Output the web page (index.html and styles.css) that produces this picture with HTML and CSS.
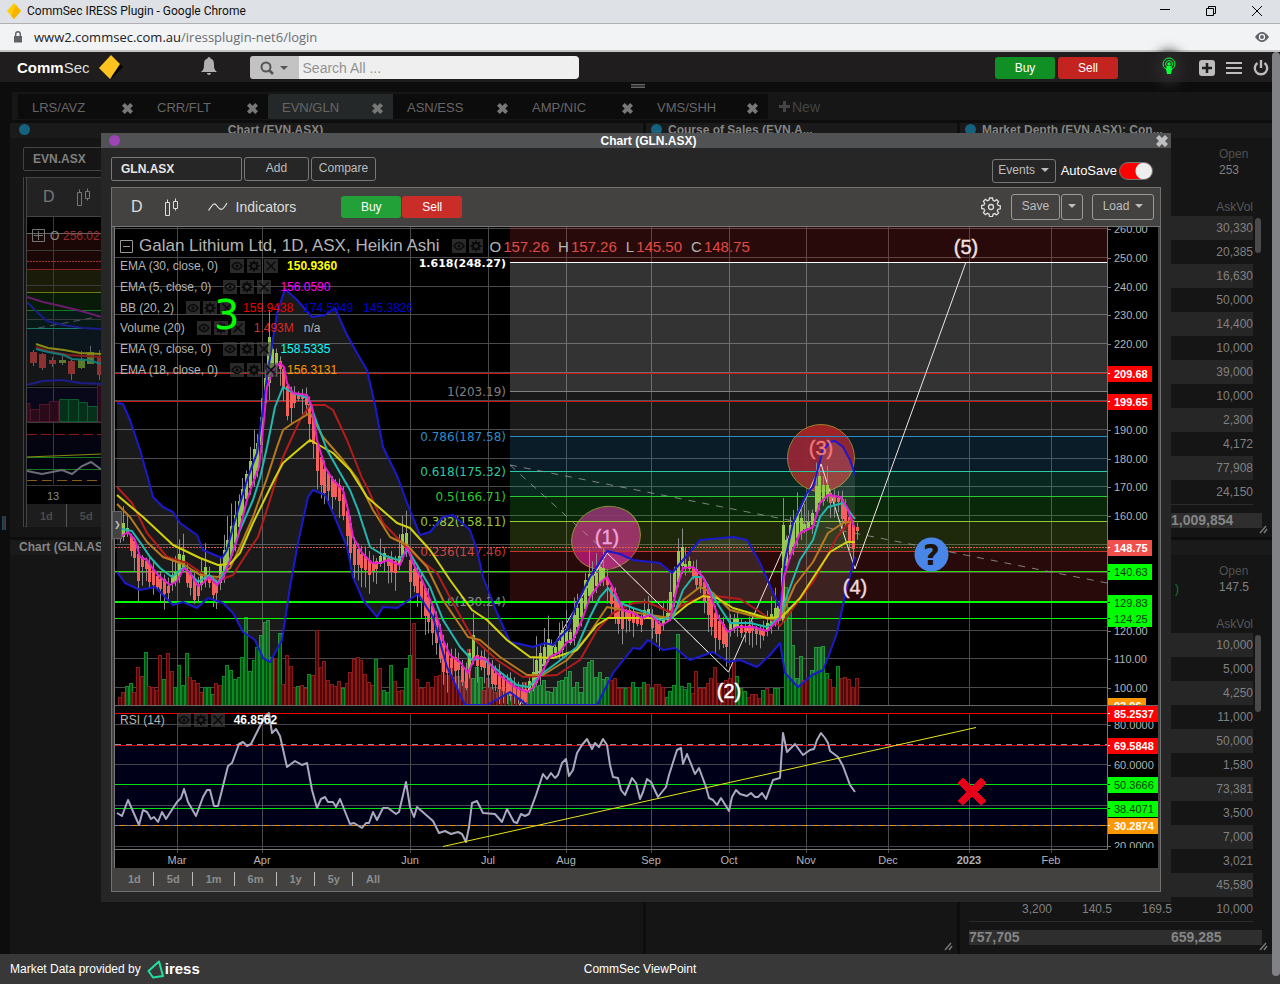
FILE: index.html
```html
<!DOCTYPE html>
<html lang="en">
  <head>
    <meta charset="UTF-8" />
    <title>CommSec IRESS Plugin</title>
    <link rel="stylesheet" href="styles.css">
  </head>
  <body>
    <!-- Shared icons -->
    <svg class="sprite" aria-hidden="true">
      <symbol id="i-cross" viewBox="0 0 12 12"><path d="M3 0 6 3 9 0 12 3 9 6 12 9 9 12 6 9 3 12 0 9 3 6 0 3z" /></symbol>
      <symbol id="i-caret" viewBox="0 0 8 4"><path d="M0 0H8L4 4z" /></symbol>
      <symbol id="i-eye" viewBox="0 0 14 14"><path d="M2 7q5-7 10 0q-5 7-10 0z" fill="none" stroke="currentColor" stroke-width="1.3" /><circle cx="7" cy="7" r="1.6" fill="currentColor" /></symbol>
      <symbol id="i-gear" viewBox="0 0 14 14"><circle cx="7" cy="7" r="3" fill="none" stroke="currentColor" stroke-width="2" /><path d="M7 1.5V4M7 10v2.500M1.500 7H4M10 7h2.500M3.100 3.100l1.800 1.800M9.100 9.100l1.800 1.800M3.100 10.900l1.800-1.800M9.100 4.900l1.800-1.800" stroke="currentColor" stroke-width="1.800" /></symbol>
      <symbol id="i-del" viewBox="0 0 14 14"><path d="M2.500 2.500l9 9M11.500 2.500l-9 9" stroke="currentColor" stroke-width="1.500" /></symbol>
      <symbol id="i-candles" viewBox="0 0 14 19"><path d="M.5 4.500h4v13h-4zM2.500 1.500v3M8.500 3.500h4v7h-4zM10.500 .5v3M10.500 10.500v2" fill="none" stroke="currentColor" /></symbol>
      <symbol id="i-grip" viewBox="0 0 9 9"><path d="M1 8 7 1M5 8l3-4" fill="none" stroke="currentColor" stroke-width="1.500" /></symbol>
    </svg>

    <div class="titlebar">
      <svg width="16" height="18" viewBox="0 0 16 18"><path d="M8 1 15 9 8 17 1 9z" fill="#ffcb05" /><path d="M10 3 15 9 8 17 5 14z" fill="#f5b400" /></svg>
      <span>CommSec IRESS Plugin - Google Chrome</span>
      <div class="window-buttons">
        <button aria-label="Minimise"><svg width="12" height="12"><path d="M1 4.500H11" stroke="#000" /></svg></button>
        <button aria-label="Restore"><svg width="12" height="12"><path d="M1.500 3.500h7v7h-7zM3.500 3V1.500h7v7H9" fill="none" stroke="#000" /></svg></button>
        <button aria-label="Close"><svg width="12" height="12"><path d="M1 1l10 10M11 1 1 11" stroke="#000" /></svg></button>
      </div>
    </div>

    <div class="addressbar">
      <svg width="10" height="12" viewBox="0 0 10 12"><path d="M1 5h8v6.500H1z" fill="#5f6368" /><path d="M2.700 5V3a2.300 2.300 0 014.600 0v2" fill="none" stroke="#5f6368" stroke-width="1.400" /></svg>
      <span class="url">www2.commsec.com.au<span>/iressplugin-net6/login</span></span>
      <svg class="push" width="14" height="10" viewBox="0 0 14 10"><path d="M0 5q7-10 14 0q-7 10-14 0z" fill="#5f6368" /><circle cx="7" cy="5" r="3.200" fill="#f1f3f4" /><circle cx="7" cy="5" r="1.900" fill="#5f6368" /></svg>
    </div>

    <div class="app">
      <header class="topbar">
        <a class="logo" href="#"><b>Comm</b><span>Sec</span>
          <svg width="24" height="24" viewBox="0 0 24 24"><path d="M13 1 24 12 13 23z" fill="#000" /><path d="M12 0 21 9 11 24 0 13z" fill="#ffc21f" /></svg>
        </a>
        <button class="icon-btn bell" aria-label="Notifications"><svg width="18" height="18" viewBox="0 0 18 18"><path d="M9 0a1.500 1.500 0 011.500 1.500C13.500 2.500 14 4.500 14 8s.5 5 3 7H1c2.500-2 3-3.500 3-7s.5-5.500 3.500-6.500A1.500 1.500 0 019 0zM7 16h4a2 2 0 01-4 0z" fill="#b0b0b0" /></svg></button>
        <div class="search">
          <button aria-label="Search type"><svg width="14" height="14" viewBox="0 0 14 14"><circle cx="6" cy="6" r="4.500" fill="none" stroke="#555" stroke-width="2" /><path d="M9 9l4 4" stroke="#555" stroke-width="2.500" /></svg><svg class="caret"><use href="#i-caret" /></svg></button>
          <input type="text" aria-label="Search" placeholder="Search All ...">
        </div>
        <div class="trade">
          <button class="buy">Buy</button>
          <button class="sell">Sell</button>
        </div>
        <div class="tools">
          <button class="icon-btn bulb" aria-label="Live data"><svg width="14" height="18" viewBox="0 0 14 18"><g fill="none" stroke="#0bff3b"><circle cx="7" cy="7" r="6" /><circle cx="7" cy="7" r="3.500" /></g><circle cx="7" cy="7" r="1.800" fill="#0bff3b" /><path d="M5 9h4l1 3-1 5H5l-1-5z" fill="#0bff3b" /></svg></button>
          <button class="icon-btn" aria-label="Add"><svg width="16" height="16" viewBox="0 0 16 16"><rect width="16" height="16" rx="3" fill="#bdbdbd" /><path d="M8 3v10M3 8h10" stroke="#1f1d1e" stroke-width="2.500" /></svg></button>
          <button class="icon-btn" aria-label="Menu"><svg width="16" height="14" viewBox="0 0 16 14"><path d="M0 2h16M0 7h16M0 12h16" stroke="#bdbdbd" stroke-width="2" /></svg></button>
          <button class="icon-btn" aria-label="Log out"><svg width="16" height="16" viewBox="0 0 16 16"><path d="M4.500 3a6.200 6.200 0 107 0M8 0v8" fill="none" stroke="#bdbdbd" stroke-width="2.400" /></svg></button>
        </div>
      </header>

      <div class="handle"><span></span></div>

      <nav class="tabs">
        <div class="tab"><a href="#">LRS/AVZ</a><button aria-label="Close LRS/AVZ"><svg><use href="#i-cross" /></svg></button></div>
        <div class="tab"><a href="#">CRR/FLT</a><button aria-label="Close CRR/FLT"><svg><use href="#i-cross" /></svg></button></div>
        <div class="tab active"><a href="#">EVN/GLN</a><button aria-label="Close EVN/GLN"><svg><use href="#i-cross" /></svg></button></div>
        <div class="tab"><a href="#">ASN/ESS</a><button aria-label="Close ASN/ESS"><svg><use href="#i-cross" /></svg></button></div>
        <div class="tab"><a href="#">AMP/NIC</a><button aria-label="Close AMP/NIC"><svg><use href="#i-cross" /></svg></button></div>
        <div class="tab"><a href="#">VMS/SHH</a><button aria-label="Close VMS/SHH"><svg><use href="#i-cross" /></svg></button></div>
        <button class="new-tab"><svg width="11" height="11" viewBox="0 0 11 11"><path d="M5.500 0v11M0 5.500h11" stroke="currentColor" stroke-width="3" /></svg>New</button>
      </nav>

      <main class="workspace">
        <div class="column">
          <section class="panel">
            <h2 class="panel-head centred"><i class="dot"></i><span>Chart (EVN.ASX)</span></h2>
            <div class="mini">
              <input class="code" type="text" aria-label="Security code" value="EVN.ASX">
              <div class="mini-frame">
                <div class="mini-bar"><span>D</span><svg width="14" height="19"><use href="#i-candles" /></svg></div>
                <svg class="mini-chart" viewBox="27 217 75 287" width="75" height="287">
                  <rect x="27" y="217" width="75" height="287" fill="#000" />
                  <rect x="27" y="233" width="75" height="36" fill="#1c0707" />
                  <rect x="27" y="269" width="75" height="23" fill="#1a1b08" />
                  <rect x="27" y="292" width="75" height="18" fill="#081a08" />
                  <rect x="27" y="310" width="75" height="18" fill="#071a17" />
                  <rect x="27" y="328" width="75" height="39" fill="#0b161c" />
                  <rect x="27" y="353" width="75" height="33" fill="#151617" />
                  <rect x="27" y="387" width="75" height="35" fill="#08081a" />
                  <rect x="27" y="434" width="75" height="47" fill="#040410" />
                  <path d="M53.500 217V484M27 250.500h75M27 285.500h75M27 319.500h75M27 387.500h75M27 422.500h75M27 485.500h75" stroke="#3a3a3a" />
                  <path d="M27 233.500h75" stroke="#666" /><path d="M27 261.500h75" stroke="#9a3030" stroke-dasharray="2 1" />
                  <path d="M27 269.500h75" stroke="#8a2020" /><path d="M27 292.500h75" stroke="#6c7a18" />
                  <path d="M27 310.500h75M27 457.500h75M27 469.500h75" stroke="#167a20" /><path d="M27 328.500h75" stroke="#167a68" />
                  <path d="M27 434.500h75" stroke="#8a1818" stroke-dasharray="10 4" /><path d="M27 480.500h75" stroke="#8a5a18" stroke-dasharray="10 5" />
                  <path d="M27 457l75-3" stroke="#8a8a10" /><path d="M38 328 102 316" stroke="#556" stroke-dasharray="7 5" />
                  <g fill="#2a0a18" stroke="#52142c"><path d="M27 403.500h3v18h-3zM30.500 409.500h9v12h-9zM39.500 404.500h10v17h-10zM49.500 401.500h9v20h-9zM97.500 385.500h5v36h-5z" /></g>
                  <g fill="#06301a" stroke="#0b5a30"><path d="M59.500 399.500h9v22h-9zM68.500 399.500h10v22h-10zM78.500 402.500h9v19h-9zM87.500 406.500h10v15h-10z" /></g>
                  <path d="M33.500 350v16M42.500 353v17M52.500 357v10M62.500 355v10M71.500 360v20M81.500 351v18M90.500 346v18M99.500 350v30" stroke="#666" />
                  <path d="M30 352h7v11h-7zM39 354h7v14h-7zM49 360h7v4h-7zM68 361h7v13h-7zM97 357h5v18h-5z" fill="#8c3232" />
                  <path d="M59 360h7v3h-7zM78 359h7v9h-7zM87 352h7v12h-7z" fill="#5c7a2c" />
                  <g fill="none" stroke-width="2"><path d="M27 297l16 5 18 4 20 5 21 6" stroke="#6a1c6a" /><path d="M27 302l10 10 10 9 16 4 20 3 19 1M27 385l15-4 20-1 18 3 22 1" stroke="#1c1c8a" /><path d="M36 344l12 4 16 2 16 3 22 1" stroke="#8a8a14" /><path d="M36 347l12 4 20 4 34 2" stroke="#8a1c1c" /><path d="M36 349l12 3 16 3 8 4 16 1 14 4" stroke="#147a7a" /><path d="M27 471l15 3 20-4 10 4 10-8 9-4 11 8" stroke="#6c6c78" /></g>
                  <path d="M32.500 229.500h12v12h-12zM38.500 231v9M34 235.500h9" fill="none" stroke="#777" />
                  <text x="50" y="240" fill="#888" font-size="12">O</text><text x="63" y="240" fill="#9a2c2c" font-size="12">256.02</text>
                  <text x="53" y="500" fill="#888" font-size="11" text-anchor="middle">13</text>
                </svg>
                <div class="mini-range"><button>1d</button><button>5d</button></div>
              </div>
            </div>
          </section>
          <section class="panel">
            <h2 class="panel-head left"><span>Chart (GLN.ASX)</span></h2>
          </section>
        </div>

        <section class="panel">
          <h2 class="panel-head"><i class="dot"></i><span>Course of Sales (EVN.A...</span></h2>
          <svg class="resizer" width="9" height="9"><use href="#i-grip" /></svg>
        </section>

        <div class="column">
          <section class="panel">
            <h2 class="panel-head"><i class="dot"></i><span>Market Depth (EVN.ASX): Con...</span></h2>
            <dl class="quote"><dt>Open</dt><dd>253</dd></dl>
            <div class="depth">
              <table>
                <thead><tr><th></th><th></th><th></th><th>AskVol</th></tr></thead>
                <tbody>
                  <tr><td></td><td></td><td></td><td>30,330</td></tr>
                  <tr><td></td><td></td><td></td><td>20,385</td></tr>
                  <tr><td></td><td></td><td></td><td>16,630</td></tr>
                  <tr><td></td><td></td><td></td><td>50,000</td></tr>
                  <tr><td></td><td></td><td></td><td>14,400</td></tr>
                  <tr><td></td><td></td><td></td><td>10,000</td></tr>
                  <tr><td></td><td></td><td></td><td>39,000</td></tr>
                  <tr><td></td><td></td><td></td><td>10,000</td></tr>
                  <tr><td></td><td></td><td></td><td>2,300</td></tr>
                  <tr><td></td><td></td><td></td><td>4,172</td></tr>
                  <tr><td></td><td></td><td></td><td>77,908</td></tr>
                  <tr><td></td><td></td><td></td><td>24,150</td></tr>
                </tbody>
              </table>
              <span class="thumb short"></span>
            </div>
            <div class="totals"><span></span><span>1,009,854</span></div>
            <svg class="resizer" width="9" height="9"><use href="#i-grip" /></svg>
          </section>
          <section class="panel">
            <h2 class="panel-head"></h2>
            <dl class="quote"><dt>Open</dt><dd><span class="change">)</span>147.5</dd></dl>
            <div class="depth">
              <table>
                <thead><tr><th></th><th></th><th></th><th>AskVol</th></tr></thead>
                <tbody>
                  <tr><td></td><td></td><td></td><td>10,000</td></tr>
                  <tr><td></td><td></td><td></td><td>5,000</td></tr>
                  <tr><td></td><td></td><td></td><td>4,250</td></tr>
                  <tr><td></td><td></td><td></td><td>11,000</td></tr>
                  <tr><td></td><td></td><td></td><td>50,000</td></tr>
                  <tr><td></td><td></td><td></td><td>1,580</td></tr>
                  <tr><td></td><td></td><td></td><td>73,381</td></tr>
                  <tr><td></td><td></td><td></td><td>3,500</td></tr>
                  <tr><td></td><td></td><td></td><td>7,000</td></tr>
                  <tr><td></td><td></td><td></td><td>3,021</td></tr>
                  <tr><td></td><td></td><td></td><td>45,580</td></tr>
                  <tr><td>3,200</td><td>140.5</td><td>169.5</td><td>10,000</td></tr>
                </tbody>
              </table>
              <span class="thumb"></span>
            </div>
            <div class="totals"><span>757,705</span><span>659,285</span></div>
            <svg class="resizer" width="9" height="9"><use href="#i-grip" /></svg>
          </section>
        </div>

        <span class="splitter"></span>

        <!-- Floating chart window -->
        <section class="dialog">
          <header class="dialog-head">
            <i class="dot"></i>
            <h2>Chart (GLN.ASX)</h2>
            <button aria-label="Close"><svg><use href="#i-cross" /></svg></button>
          </header>
          <div class="controls">
            <input class="code" type="text" aria-label="Security code" value="GLN.ASX">
            <button class="btn">Add</button>
            <button class="btn">Compare</button>
            <button class="btn events">Events<svg class="caret"><use href="#i-caret" /></svg></button>
            <label class="autosave">AutoSave<input type="checkbox" checked></label>
          </div>

          <div class="frame">
            <div class="toolbar">
              <button class="tool interval">D</button>
              <button class="tool" aria-label="Chart style"><svg width="14" height="19"><use href="#i-candles" /></svg></button>
              <button class="tool indicators"><svg width="20" height="10" viewBox="0 0 20 10"><path d="M.5 8.500C5 2 6 0 9 4s5 6 10-3" fill="none" stroke="currentColor" stroke-width="1.200" /></svg>Indicators</button>
              <button class="buy">Buy</button>
              <button class="sell">Sell</button>
              <button class="tool settings" aria-label="Settings"><svg width="20" height="20" viewBox="0 0 20 20" fill="none" stroke="currentColor" stroke-width="1.300"><path d="M8.500 1h3l.5 2.300 1.600.7 2-1.300 2 2-1.300 2 .7 1.600 2.300.5v3l-2.300.5-.7 1.600 1.300 2-2 2-2-1.300-1.600.7-.5 2.300h-3L8 17l-1.600-.7-2 1.300-2-2 1.300-2L3 12l-2.300-.5v-3L3 8l.7-1.600-1.300-2 2-2 2 1.300L8 3z" /><circle cx="10" cy="10" r="2.500" /></svg></button>
              <div class="group">
                <button class="btn">Save</button><button class="btn drop" aria-label="Save options"><svg class="caret"><use href="#i-caret" /></svg></button>
              </div>
              <button class="btn load">Load<svg class="caret"><use href="#i-caret" /></svg></button>
            </div>

            <div class="chart">
              <svg id="chart" viewBox="115 227 1043 641"></svg>
              <div class="legend">
                <div class="legend-title">
                  <svg width="13" height="13"><path d="M.5 .5h12v12H.5zM3 6.500h7" fill="none" stroke="#999" /></svg>
                  <span>Galan Lithium Ltd, 1D, ASX, Heikin Ashi</span>
                  <div class="mini-btns"><button aria-label="Hide"><svg><use href="#i-eye" /></svg></button><button aria-label="Format"><svg><use href="#i-gear" /></svg></button></div>
                  <div class="ohlc"><span>O<b>157.26</b></span><span>H<b>157.26</b></span><span>L<b>145.50</b></span><span>C<b>148.75</b></span></div>
                </div>
                <div class="studies" id="studies"></div>
              </div>
              <div class="legend rsi" id="rsiLegend"></div>
              <span class="note">3</span>
              <button class="expand" aria-label="Show drawing tools">&#x276F;</button>
            </div>

            <div class="range">
              <button>1d</button><button>5d</button><button>1m</button><button>6m</button><button>1y</button><button>5y</button><button>All</button>
            </div>
          </div>
        </section>
      </main>
      <span class="page-scroll"></span>
    </div>

    <footer class="footer">
      <div class="provider">Market Data provided by
        <svg width="17" height="19" viewBox="0 0 17 19"><path d="M12 1.500 1.500 11l4.500 6.500 10-1.500z" fill="none" stroke="#1fe29b" stroke-width="2" stroke-linejoin="round" /></svg>
        <b>iress</b>
      </div>
      <span>CommSec ViewPoint</span>
      <span></span>
    </footer>

    <script src="chart.js"></script>
  </body>
</html>
```
FILE: styles.css
```css
:root {
  --page: #0d0d0d;
  --panel: #151515;
  --bar: #434240;
  --dialog: #262626;
  --line: #777;
  --text: #bdbdbd;
  --dim: #808080;
}

* {
  box-sizing: border-box;
}

body {
  margin: 0;
  height: 100vh;
  display: flex;
  flex-direction: column;
  overflow: hidden;
  background: var(--page);
  color: var(--text);
  font: 12px/16px "Liberation Sans", Arial, sans-serif;
}

button,
input {
  font: inherit;
  color: inherit;
  margin: 0;
}

button {
  display: flex;
  align-items: center;
  justify-content: center;
  padding: 0;
  border: 0;
  background: none;
  cursor: pointer;
}

h2 {
  margin: 0;
  font-size: 12px;
}

a {
  color: inherit;
  text-decoration: none;
}

svg {
  display: block;
  flex: none;
}

.sprite {
  position: absolute;
  width: 0;
  height: 0;
}

.caret {
  width: 8px;
  height: 4px;
  margin-left: 6px;
  fill: currentColor;
}

/* Browser chrome */
.titlebar {
  display: flex;
  align-items: center;
  height: 24px;
  flex: none;
  padding: 0 17px 2px 6px;
  gap: 5px;
  background: #dee1e6;
  border-bottom: 1px solid #b0b0b0;
  color: #111;
  font-family: Roboto, sans-serif;
}

.window-buttons {
  display: flex;
  gap: 34px;
  margin-left: auto;
}

.addressbar {
  display: flex;
  align-items: center;
  height: 28px;
  flex: none;
  padding: 0 11px 0 13px;
  gap: 11px;
  background: #f1f3f4;
  border-bottom: 2px solid #c4c4c4;
  color: #202124;
  font-family: "Open Sans", sans-serif;
  font-size: 13px;
}

.url span {
  color: #6a6e73;
}

.push {
  margin-left: auto;
}

/* App header */
.app {
  position: relative;
  flex: 1;
  min-height: 0;
  display: flex;
  flex-direction: column;
  padding-right: 8px;
}

.topbar {
  display: flex;
  align-items: center;
  height: 30px;
  flex: none;
  padding: 1px 3px 0 17px;
  background: #1f1d1e;
}

.logo {
  display: flex;
  align-items: center;
  color: #fff;
  font-size: 15px;
}

.logo span {
  color: #ddd;
}

.logo svg {
  margin: -1px 0 1px 9px;
}

.bell {
  margin-left: 77px;
  padding-bottom: 4px;
}

.search {
  display: flex;
  width: 329px;
  height: 23px;
  margin-left: 32px;
}

.search button {
  width: 49px;
  background: #c3c3c3;
  border-radius: 3px 0 0 3px;
  color: #555;
}

.search input {
  flex: 1;
  min-width: 0;
  padding: 0 4px;
  border: 0;
  border-radius: 0 4px 4px 0;
  background: #efefef;
  font-size: 14px;
}

.search input::placeholder {
  color: #939393;
}

.trade {
  display: flex;
  gap: 3px;
  margin-left: auto;
}

.buy,
.sell {
  width: 60px;
  height: 22px;
  border-radius: 3px;
  color: #fff;
}

.buy {
  background: #0f8f24;
}

.sell {
  background: #c42420;
}

.tools {
  display: flex;
  align-items: center;
  gap: 11px;
  margin-left: 44px;
}

.bulb {
  margin-right: 12px;
  padding-bottom: 4px;
  border-radius: 50%;
  background: #2a292a;
  box-shadow: 0 0 12px 6px #2a292a;
}

.handle {
  display: flex;
  justify-content: center;
  height: 10px;
  flex: none;
  padding: 2px 0 0 4px;
}

.handle span {
  width: 14px;
  height: 4px;
  border: solid #666;
  border-width: 1px 0;
  background: #333;
}

.tabs {
  display: flex;
  height: 28px;
  flex: none;
  margin-left: 12px;
  padding: 2px 0 1px 6px;
  background: #161616;
  color: #666;
  font-size: 13px;
}

.tab {
  display: flex;
  align-items: center;
  justify-content: space-between;
  width: 125px;
  padding: 3px 10px 0 14px;
  background: #0d0c0d;
}

.tab svg {
  width: 11px;
  height: 11px;
  fill: #777;
}

.tab.active {
  background: #242828;
  border-radius: 4px 4px 0 0;
  box-shadow: 3px 0 #242828;
}

.new-tab {
  gap: 2px;
  padding-left: 11px;
  color: #444;
  font-size: 14px;
}

/* Workspace */
.workspace {
  position: relative;
  flex: 1;
  min-height: 0;
  display: grid;
  grid-template-columns: 633fr 311fr 312fr;
  gap: 3px;
  padding: 3px 0 0 10px;
}

.column {
  display: grid;
  grid-template-rows: 1fr 1fr;
  gap: 3px;
  min-height: 0;
  min-width: 0;
}

.panel {
  position: relative;
  background: var(--panel);
  min-width: 0;
  overflow: hidden;
}

.panel-head {
  display: flex;
  align-items: center;
  gap: 6px;
  height: 15px;
  padding: 0 0 2px 5px;
  background: #1a1a1a;
  color: #858585;
  white-space: nowrap;
}

.panel-head.centred span {
  flex: 1;
  padding-right: 128px;
  text-align: center;
}

.panel-head.left {
  padding-left: 9px;
}

.dot {
  width: 11px;
  height: 11px;
  flex: none;
  border-radius: 50%;
  background: #15627e;
}

.panel-head.centred .dot {
  margin-left: 4px;
}

.resizer {
  position: absolute;
  right: 4px;
  bottom: 3px;
  color: #777;
}

.code {
  width: 131px;
  height: 24px;
  padding: 0 9px;
  border: 1px solid var(--line);
  border-radius: 2px;
  background: transparent;
  color: #e6e6e6;
  font-weight: bold;
}

.mini {
  padding: 9px 13px;
}

.mini .code {
  color: var(--dim);
  border-color: #444;
}

.mini-frame {
  height: 350px;
  margin-top: 6px;
  border: 1px solid #444;
  border-left: 4px double #444;
}

.mini-bar {
  display: flex;
  align-items: center;
  gap: 22px;
  height: 39px;
  padding-left: 16px;
  background: #222;
  border-bottom: 1px solid #444;
  color: #777;
  font-size: 16px;
}

.mini-range {
  display: flex;
  height: 23px;
  background: #1e1d1d;
  color: #4a4a4a;
  font-weight: bold;
  font-size: 11px;
}

.mini-range button {
  padding: 0 13px;
}

.mini-range button:first-child {
  border-right: 1px solid #555;
}

/* Market depth */
.quote {
  height: 60px;
  margin: 0;
  padding: 8px 13px 0 0;
  display: grid;
  grid-template-columns: 40px;
  justify-content: end;
  align-content: start;
}

.quote dt {
  color: #505050;
}

.quote dd {
  position: relative;
  margin: 0;
  color: var(--dim);
}

.change {
  position: absolute;
  right: 80px;
  top: 2px;
  color: #0d7f2a;
}

.depth {
  position: relative;
  margin: 0 19px 0 9px;
}

.depth table {
  width: 100%;
  table-layout: fixed;
  border-collapse: collapse;
  border-bottom: 1px solid #2a2a2a;
}

.depth th,
.depth td {
  height: 24px;
  padding: 0;
  text-align: right;
  color: var(--dim);
}

.depth th {
  height: 18px;
  color: #585858;
  font-weight: normal;
}

.depth th:nth-child(1) {
  width: 83px;
}

.depth th:nth-child(2),
.depth th:nth-child(3) {
  width: 60px;
}

.depth tbody tr:nth-child(odd) {
  background: #262626;
}

.thumb {
  position: absolute;
  right: -8px;
  top: 20px;
  width: 6px;
  height: 77px;
  border-radius: 3px;
  background: #4a4a4c;
}

.thumb.short {
  height: 35px;
}

.totals {
  display: grid;
  grid-template-columns: 202px 1fr;
  height: 15px;
  margin: 8px 10px 0 9px;
  background: #2e2e2e;
  color: #858585;
  font-size: 14px;
  line-height: 15px;
  font-weight: bold;
}

.splitter {
  position: absolute;
  left: 2px;
  top: 396px;
  width: 4px;
  height: 14px;
  border: solid #27485c;
  border-width: 0 1px;
  background: #333;
}

.page-scroll {
  position: absolute;
  right: 0;
  top: 0;
  bottom: -22px;
  width: 8px;
  border-radius: 4px;
  background: #808285;
  z-index: 2;
}

/* Floating chart window */
.dialog {
  position: absolute;
  left: 101px;
  right: 101px;
  top: 13px;
  padding-bottom: 10px;
  background: var(--dialog);
}

.dialog-head {
  display: flex;
  align-items: center;
  height: 15px;
  padding: 0 3px 0 8px;
  background: #505254;
  color: #fff;
}

.dialog-head .dot {
  background: #9d44b5;
}

.dialog-head h2 {
  flex: 1;
  padding-left: 21px;
  text-align: center;
}

.dialog-head svg {
  width: 12px;
  height: 12px;
  fill: #c0c0c0;
}

.controls {
  display: flex;
  align-items: flex-start;
  gap: 2px;
  height: 39px;
  padding: 9px 8px 0 10px;
}

.btn {
  min-width: 65px;
  height: 24px;
  padding-bottom: 2px;
  border: 1px solid var(--line);
  border-radius: 3px;
}

.events {
  margin: 2px 3px 0 auto;
  min-width: 64px;
}

.autosave {
  display: flex;
  align-items: center;
  gap: 2px;
  height: 18px;
  margin: 5px 10px 0 0;
  color: #fff;
  font-size: 13px;
}

.autosave input {
  appearance: none;
  width: 34px;
  height: 18px;
  border: 1px solid #777;
  border-radius: 9px;
  background: radial-gradient(circle at 24px 8px, #eee 8px, #f00 9px);
}

.frame {
  margin: 0 10px;
  border: 1px solid #707070;
  background: var(--bar);
}

.toolbar {
  display: flex;
  align-items: center;
  height: 39px;
  padding: 0 6px 0 19px;
  border-bottom: 1px solid var(--line);
}

.tool {
  color: #ddd;
  font-size: 14px;
}

.interval {
  margin-right: 22px;
  font-size: 16px;
}

.indicators {
  gap: 8px;
  margin: 0 45px 0 29px;
}

.toolbar .buy {
  margin-right: 1px;
  background: #22a139;
}

.toolbar .sell {
  background: #ca2c28;
}

.settings {
  margin: 0 10px 0 auto;
}

.group {
  display: flex;
  gap: 1px;
}

.toolbar .btn {
  min-width: 49px;
  height: 26px;
  border-color: #999;
}

.toolbar .drop {
  min-width: 22px;
}

.drop .caret {
  margin: 0;
}

.toolbar .load {
  min-width: 62px;
  margin-left: 9px;
}

.chart {
  position: relative;
  margin: 0 2px;
  border-left: 1px solid var(--line);
}

#chart {
  width: 100%;
  height: auto;
  font-family: "Liberation Sans", Arial, sans-serif;
  font-size: 11px;
}

.legend {
  position: absolute;
  left: 5px;
  top: 9px;
  color: #b4b4b4;
  white-space: nowrap;
}

.legend.rsi {
  top: 485px;
}

.legend-title {
  display: flex;
  align-items: center;
  gap: 6px;
  height: 20px;
  font-size: 17px;
}

.legend-title .mini-btns {
  margin-left: 6px;
}

.ohlc {
  display: flex;
  gap: 9px;
  padding: 2px 0 0 1px;
  font-size: 15px;
}

.ohlc b {
  padding-left: 2px;
  color: #e04a45;
  font-weight: normal;
}

.studies {
  display: grid;
  height: 124px;
}

.study {
  display: flex;
  align-items: center;
  gap: 10px;
}

.study .mini-btns {
  margin: 0 -1px 0 2px;
}

.mini-btns {
  display: flex;
  gap: 3px;
  color: #0a0a0a;
}

.mini-btns button {
  background: rgba(70, 70, 70, 0.6);
}

.mini-btns svg {
  width: 14px;
  height: 14px;
}

.note {
  position: absolute;
  left: 99px;
  top: 68px;
  color: #0f0;
  font: 40px/40px "DejaVu Sans", sans-serif;
}

.expand {
  position: absolute;
  left: -3px;
  top: 284px;
  width: 10px;
  height: 28px;
  border: 1px solid #666;
  background: #434343;
  font-size: 8px;
}

.range {
  display: flex;
  align-items: center;
  height: 23px;
  padding: 0 0 1px 3px;
  color: #8c8c8c;
  font-size: 11px;
  font-weight: bold;
}

.range button {
  height: 14px;
  padding: 0 12px 0 13px;
}

.range button + button {
  border-left: 1px solid #bbb;
}

.footer {
  display: grid;
  grid-template-columns: 1fr auto 1fr;
  align-items: center;
  height: 30px;
  flex: none;
  padding: 0 10px;
  background: #383838;
  color: #fff;
}

.provider {
  display: flex;
  align-items: center;
  gap: 6px;
}

.provider b {
  margin-left: -5px;
  font-size: 15px;
}
```
FILE: chart.js
```js
const NS = "http://www.w3.org/2000/svg";
const chart = document.getElementById("chart");

const add = (tag, attrs, text) => {
  const el = document.createElementNS(NS, tag);
  for (const key in attrs) el.setAttribute(key, attrs[key]);
  if (text !== undefined) el.textContent = text;
  chart.appendChild(el);
  return el;
};

const hline = (y, x1, x2, stroke, extra) =>
  add("path", { d: `M${x1} ${y}H${x2}`, stroke, ...extra });

const RIGHT = 1107;
const priceY = (p) => Math.round(257 + (250 - p) * 2.867) + 0.5;

add("rect", { x: 115, y: 227, width: 1043, height: 641, fill: "#000" });
add("rect", { x: 115, y: 745, width: 992, height: 80, fill: "#000019" });

// grid
const months = [
  ["Mar", 177], ["Apr", 262], ["Jun", 410], ["Jul", 488], ["Aug", 566], ["Sep", 651],
  ["Oct", 729], ["Nov", 806], ["Dec", 888], ["2023", 969], ["Feb", 1051],
];
months.forEach(([, x]) => add("path", { d: `M${x + 0.5} 227V853`, stroke: "#4a4a4a" }));
for (let p = 100; p <= 260; p += 10) hline(priceY(p), 115, RIGHT, "#4a4a4a");
[724.5, 764.5, 805.5, 846.5].forEach((y) => hline(y, 115, RIGHT, "#44444c"));

// circles behind the retracement
add("ellipse", { cx: 606, cy: 538, rx: 35, ry: 31, transform: "rotate(-25 606 538)", fill: "#a8107e", "fill-opacity": 0.9, stroke: "#97803a" });
add("circle", { cx: 821, cy: 458, r: 33.5, fill: "#ae0d10", "fill-opacity": 0.95, stroke: "#a88010" });

// fibonacci bands
const fib = [
  ["", 227, "#c83232"],
  ["1.618(248.27)", 262, "#ffffff"],
  ["1(203.19)", 391, "#808080"],
  ["0.786(187.58)", 436, "#2b8cc8"],
  ["0.618(175.32)", 471, "#2cc8a0"],
  ["0.5(166.71)", 496, "#2cc832"],
  ["0.382(158.11)", 521, "#96c832"],
  ["0.236(147.46)", 551, "#c83232"],
  ["0(130.24)", 601, "#808080"],
];
fib.forEach(([, y, color], i) => {
  if (i === fib.length - 1) return;
  add("rect", { x: 510, y, width: 597, height: fib[i + 1][1] - y, fill: color, "fill-opacity": 0.2 });
});
fib.forEach(([label, y, color], i) => {
  if (i === 0) return;
  hline(y + 0.5, 510, RIGHT, color);
  add("text", {
    x: 506, y: y + 5, fill: color, "text-anchor": "end",
    "font-family": "DejaVu Sans, sans-serif",
    "font-size": i === 1 ? 11 : 12,
    "font-weight": i === 1 ? "bold" : "normal",
  }, label);
});

// volume in pixels, negative on falling days
const volume = [
  -8, -13, 19, 22, -13, -38, -29, 53, -19, -18, -15, -50, 26, -52, -34, 18, 40, 20, 52, -28, -25, -22, -13,
  18, 18, 11, -22, -20, 29, 40, 35, 26, 28, 48, 88, 34, 45, 58, 70, 83, 85, 48, -47, 72, -21, -50, -39, -18,
  19, -20, -17, 31, -30, -75, -38, -44, -25, -21, -19, -24, 17, -22, -33, -46, -48, -45, -31, -23, -20, 46,
  -37, 15, 13, 40, -24, -14, -15, 37, 50, -82, -26, -17, -18, -23, -18, -29, -30, -46, -30, -38, -28, -29,
  -25, -24, -56, 27, 38, 28, -15, -27, -18, -13, -18, -17, -15, 27, -23, -17, -14, -23, 15, 15, 19, 20, 25,
  14, 13, 18, 24, 25, 28, 34, 18, 23, 13, 38, 43, 45, 28, 33, 26, 28, -25, -27, -17, -17, 17, -18, 23, 18,
  -17, 23, -21, 17, -21, -21, -18, 8, 14, 20, 71, 19, 16, 22, -12, -34, -17, -17, -22, -27, -38, -22, -22,
  -25, -27, -45, 29, 17, 14, -8, -11, -11, -7, 15, -17, -11, 17, 17, 0, 118, 98, 60, 27, 49, -25, -27, 35,
  58, 58, 59, 32, -26, -18, 39, -27, -28, -26, -18, -27,
];
const barX = (i) => 117.5 + (i * 737) / (volume.length - 1);
volume.forEach((v, i) => {
  const h = Math.abs(v);
  if (!h) return;
  add("rect", {
    x: Math.round(barX(i)) + 0.5, y: 705.5 - h, width: 3, height: h,
    fill: v > 0 ? "#00520f" : "#520808",
    stroke: v > 0 ? "#0a8a28" : "#8a1a1a",
  });
});

// studies
const upper = "117,403 123,404 130,420 140,450 148,478 153,497 163,507 173,512 180,523 197,535 203,550 222,558 227,550 233,527 247,480 257,453 267,377 277,313 285,289 297,300 312,317 325,315 335,308 346,333 357,353 367,370 375,405 383,447 398,478 407,503 420,535 430,532 443,517 453,515 470,530 477,550 483,577 497,613 510,642 520,644 533,647 545,643 553,645 567,630 577,603 590,577 607,551 620,554 633,560 660,563 672,573 683,560 700,540 733,537 747,540 760,563 780,608 785,560 793,523 807,493 813,487 823,450 830,442 835,441 843,447 850,460 855,475";
const lower = "117,572 125,583 140,590 155,587 173,605 183,602 197,608 208,598 223,603 233,613 243,632 255,640 263,658 270,662 282,640 290,587 298,543 308,497 313,490 325,495 336,520 347,547 353,577 363,600 377,617 383,607 397,608 418,594 433,617 447,667 465,705 487,705 510,692 527,705 597,705 613,673 633,648 640,649 648,640 663,650 675,648 690,660 713,652 728,662 740,660 757,667 770,655 780,643 785,673 798,687 812,675 823,670 829,655 837,633 845,595 855,557";
const ema5 = "117,539 128,532 135,540 140,557 147,560 153,569 160,577 170,585 177,581 184,568 190,573 198,586 203,583 209,577 217,585 223,578 230,560 237,540 247,500 254,480 259,467 262,440 267,387 273,370 280,363 284,367 287,383 293,393 307,395 312,407 317,440 325,467 333,480 343,490 348,510 353,537 362,553 372,563 380,563 388,560 400,565 407,547 413,563 423,582 433,607 438,620 443,640 450,655 460,662 468,673 475,657 487,660 497,673 503,678 515,687 527,692 533,688 542,672 550,657 560,652 567,642 573,640 582,620 590,597 600,583 607,577 613,588 623,610 633,613 642,618 650,615 662,625 670,620 677,587 683,568 693,567 703,577 710,593 718,617 728,632 737,627 753,627 767,631 780,618 784,577 790,557 800,533 813,527 820,503 828,495 840,497 847,507 854,527";
const ema9 = "122,529 132,531 142,545 150,557 160,568 172,577 184,567 198,582 209,575 218,583 228,565 240,530 253,500 260,478 267,447 275,407 283,387 293,393 308,398 317,423 327,450 343,478 350,490 358,510 370,547 383,555 398,560 408,550 430,587 443,620 460,647 472,660 482,658 500,672 517,685 528,687 543,673 558,662 577,647 590,617 600,597 608,588 618,602 633,608 648,613 660,620 673,617 683,590 693,577 703,577 717,603 730,623 750,623 767,627 780,617 788,593 800,560 813,540 820,517 828,507 843,503 855,519";
const ema18 = "117,504 130,517 147,542 163,557 183,564 200,575 218,577 230,568 240,547 253,517 267,478 277,447 283,430 293,423 310,413 323,437 343,460 357,478 373,510 390,537 407,545 427,567 443,600 468,637 480,640 500,657 527,675 543,675 567,660 587,637 607,607 633,612 650,615 670,618 683,600 700,587 713,593 730,610 757,617 780,620 787,603 795,585 813,562 828,533 843,523 854,521";
const bbMid = "117,487 132,503 147,533 167,557 187,563 207,577 220,580 233,575 247,553 258,537 270,500 283,457 300,420 310,405 325,405 333,410 347,440 362,478 367,487 383,523 407,548 417,557 437,573 453,603 472,637 497,660 523,677 557,675 580,660 597,630 613,613 633,603 647,602 670,612 687,603 707,595 740,599 757,610 780,626 797,603 813,582 837,537 855,515";
const ema30 = "117,495 143,517 173,545 200,558 218,565 230,564 240,553 253,523 275,478 283,463 298,450 310,440 333,453 350,470 367,497 397,523 410,528 430,550 450,580 472,610 487,620 507,640 530,657 553,658 577,650 597,625 608,618 647,618 670,619 687,605 703,596 717,598 733,608 767,618 782,617 800,598 813,578 830,552 847,542 855,542";

const parse = (s) => s.split(" ").map((p) => p.split(",").map(Number));
const at = (pts, x) => {
  for (let i = 1; i < pts.length; i++) {
    if (x <= pts[i][0]) {
      const [x0, y0] = pts[i - 1];
      const [x1, y1] = pts[i];
      return y0 + ((y1 - y0) * (x - x0)) / (x1 - x0);
    }
  }
  return pts[pts.length - 1][1];
};

add("polygon", { points: upper + " " + lower.split(" ").reverse().join(" "), fill: "#fff", "fill-opacity": 0.1 });

// full width levels
hline(373.5, 115, RIGHT, "#c81818");
hline(401.5, 115, RIGHT, "#c81818");
hline(571.5, 115, RIGHT, "#2fdc0c");
hline(602, 115, RIGHT, "#0f0", { "stroke-width": 2 });
hline(618.5, 115, RIGHT, "#0f0");
hline(547.5, 115, RIGHT, "#e05a50", { "stroke-dasharray": "2 1" });

// drawings under the candles
add("path", { d: "M510 465 607 553 728 672M510 465 1107 583", fill: "none", stroke: "#9a9a9a", "stroke-opacity": 0.8, "stroke-dasharray": "7 7" });
add("path", { d: "M519 706 607 553 728.5 672 821 464 855 569 966 262", fill: "none", stroke: "#f0e4e0" });

// candles follow the fast average
const fast = parse(ema5);
const noise = (i) => Math.abs(Math.sin(i * 12.9898) * 43758.5453) % 1;
const candle = (x, high, top, bottom, low, color) => {
  add("path", { d: `M${x + 0.5} ${high}V${Math.min(704, low)}`, stroke: "#8c8c8c" });
  add("rect", { x: x - 1, y: top, width: 3, height: Math.max(2, Math.min(704, bottom) - top), fill: color });
};
volume.forEach((v, i) => {
  const x = Math.round(barX(i)) + 2;
  const step = Math.max(-12, Math.min(12, at(fast, x + 2) - at(fast, x - 2)));
  const up = step < 0;
  const mid = at(fast, x) + step * 1.3 + (up ? -2 : 2);
  const half = 1 + noise(i) * 4 + Math.abs(step) * 0.9;
  candle(
    x,
    mid - half - 2 - noise(i + 7) * (up ? 22 : 8),
    Math.round(mid - half),
    Math.round(mid + half),
    mid + half + 2 + noise(i + 31) * (up ? 8 : 18),
    up ? "#97c94e" : "#f4605c"
  );
});
candle(269, 310, 337, 383, 400, "#97c94e");
candle(783, 498, 525, 622, 622, "#97c94e");

[
  [upper, "#1a1acc"], [lower, "#1a1acc"], [bbMid, "#b41c1c"], [ema18, "#b87a1c"],
  [ema30, "#d2d20a"], [ema9, "#22b8b0"], [ema5, "#e61ed2"],
].forEach(([points, stroke]) => add("polyline", { points, fill: "none", stroke, "stroke-width": 2, "stroke-linejoin": "round" }));

// wave labels and markers
[
  ["(1)", 607, 544, "#f0a0d8"], ["(2)", 729, 698, "#fff"], ["(3)", 821, 455, "#f07878"],
  ["(4)", 855, 594, "#f0d8d8"], ["(5)", 966, 254, "#f4e0e0"],
].forEach(([t, x, y, fill]) => add("text", { x, y, fill, stroke: fill, "stroke-width": 0.4, "font-size": 20, "text-anchor": "middle" }, t));
add("circle", { cx: 931.5, cy: 554.5, r: 17, fill: "#4a86e8" });
add("text", { x: 931.5, y: 565, fill: "#1d1408", "font-size": 29, "font-weight": "bold", "font-family": "DejaVu Sans, sans-serif", "text-anchor": "middle" }, "?");

// price scale
const scaleText = (t, y) => {
  hline(y + 0.5, 1107, 1111, "#777");
  add("text", { x: 1114, y: y + 4, fill: "#b4b4b4" }, t);
};
const tag = (t, y, fill, width = 45) => {
  const dark = fill === "#00ff00";
  add("rect", { x: 1107, y: y - 8, width, height: 16, fill });
  hline(y - 0.5, 1107, 1110, dark ? "#000" : "#fff");
  add("text", { x: 1114, y: y + 4, fill: dark ? "#063a06" : "#fff", "font-weight": dark ? "normal" : "bold" }, t);
};
[260, 250, 240, 230, 220, 190, 180, 170, 160, 120, 110, 100].forEach((p) => scaleText(p.toFixed(2), Math.floor(priceY(p)) + 1));
tag("209.68", 374, "#ff0000");
tag("199.65", 402, "#ff0000");
tag("148.75", 548, "#f0504c");
tag("140.63", 572, "#00ff00");
tag("129.83", 603, "#00ff00");
tag("124.25", 619, "#00ff00");
tag("93.96", 706, "#ff9800", 39);

// RSI pane
add("rect", { x: 115, y: 706, width: 992, height: 7, fill: "#070707" });
add("rect", { x: 1107, y: 706, width: 51, height: 162, fill: "#000" });
hline(705.5, 115, 1158, "#666");
hline(713.5, 115, RIGHT, "#f00000");
hline(744.5, 115, RIGHT, "#8c8c9c", { "stroke-dasharray": "6 5" });
hline(745.5, 115, RIGHT, "#d80c18");
hline(784.5, 115, RIGHT, "#00e010");
hline(808.5, 115, RIGHT, "#00e010");
hline(825.5, 115, RIGHT, "#7c7ca0");
hline(825.5, 120, RIGHT, "#f09010", { "stroke-dasharray": "6 5" });
const rsi = "117,813 122,816 128,800 139,825 143,810 147,812 151,819 154,817 158,822 162,812 166,819 177,802 181,798 184,789 188,802 196,816 203,797 207,790 210,790 214,806 218,806 228,766 232,763 239,744 243,742 247,746 251,744 265,716 269,713 272,733 276,729 280,736 287,767 295,761 302,765 307,763 312,790 317,808 321,799 325,797 328,802 333,802 336,807 340,799 350,824 354,823 362,828 366,823 369,823 373,812 377,820 383,808 388,808 396,814 399,812 403,795 406,782 410,807 414,817 417,807 433,821 439,833 445,831 451,834 458,832 462,834 466,842 469,827 472,803 477,801 483,813 495,814 502,822 507,809 514,822 517,823 521,814 525,816 529,814 536,795 543,774 547,779 551,773 555,778 558,775 562,763 566,759 569,776 573,770 577,753 582,745 587,739 592,749 595,743 599,747 603,739 607,745 610,765 613,777 618,778 621,790 625,795 632,778 636,783 640,799 643,792 647,779 651,782 658,797 666,787 669,775 677,750 681,748 683,764 687,754 695,774 699,768 706,787 709,798 713,800 717,805 721,798 729,811 732,797 736,790 740,794 747,796 751,793 755,797 758,797 762,793 766,799 773,780 780,778 783,733 787,752 795,744 803,755 810,750 814,749 817,740 821,733 825,738 828,743 830,751 838,757 843,766 850,785 855,792";
add("polyline", { points: rsi, fill: "none", stroke: "#a9a9c0", "stroke-width": 2, "stroke-linejoin": "round" });
add("path", { d: "M443 846.500 976 727.500", stroke: "#e6e614" });
add("path", { d: "M963 778l9 9 9-9 5 5-9 9 9 9-5 4-9-9-9 9-5-4 9-9-9-9z", fill: "#e6001a", stroke: "#e6001a", "stroke-linejoin": "round" });

[["80.0000", 725], ["60.0000", 765], ["20.0000", 846]].forEach(([t, y]) => scaleText(t, y));
tag("85.2537", 714, "#ff0000", 51);
tag("69.5848", 746, "#ff0000", 51);
tag("50.3666", 785, "#00ff00", 51);
tag("38.4071", 809, "#00ff00", 51);
tag("30.2874", 826, "#ff9800", 51);

// axes
add("rect", { x: 1108, y: 848, width: 50, height: 20, fill: "#000" });
add("path", { d: "M1107.500 227V849.500M115 849.500H1107.500", fill: "none", stroke: "#777" });
months.forEach(([t, x]) => add("text", { x, y: 864, fill: "#b4b4b4", "text-anchor": "middle", "font-weight": t === "2023" ? "bold" : "normal" }, t));

// legends
const study = (parent, name, values) => {
  const row = document.createElement("div");
  row.className = "study";
  row.innerHTML =
    `<span>${name}</span><div class="mini-btns">` +
    [["eye", "Hide"], ["gear", "Format"], ["del", "Remove"]]
      .map(([icon, label]) => `<button aria-label="${label}"><svg><use href="#i-${icon}" /></svg></button>`)
      .join("") + "</div>";
  values.forEach(([text, color, weight]) => {
    const value = document.createElement("span");
    value.textContent = text;
    value.style.color = color;
    value.style.fontWeight = weight || "normal";
    row.appendChild(value);
  });
  document.getElementById(parent).appendChild(row);
};
study("studies", "EMA (30, close, 0)", [["150.9360", "#ff0", "bold"]]);
study("studies", "EMA (5, close, 0)", [["156.0590", "#f0f"]]);
study("studies", "BB (20, 2)", [["159.9438", "#f00000"], ["174.5049", "#0000d0"], ["145.3826", "#0000d0"]]);
study("studies", "Volume (20)", [["1.493M", "#dc2828"], ["n/a", "#b4b4b4"]]);
study("studies", "EMA (9, close, 0)", [["158.5335", "#0ff"]]);
study("studies", "EMA (18, close, 0)", [["156.3131", "#ff9800"]]);
study("rsiLegend", "RSI (14)", [["46.8562", "#fff", "bold"]]);
```
